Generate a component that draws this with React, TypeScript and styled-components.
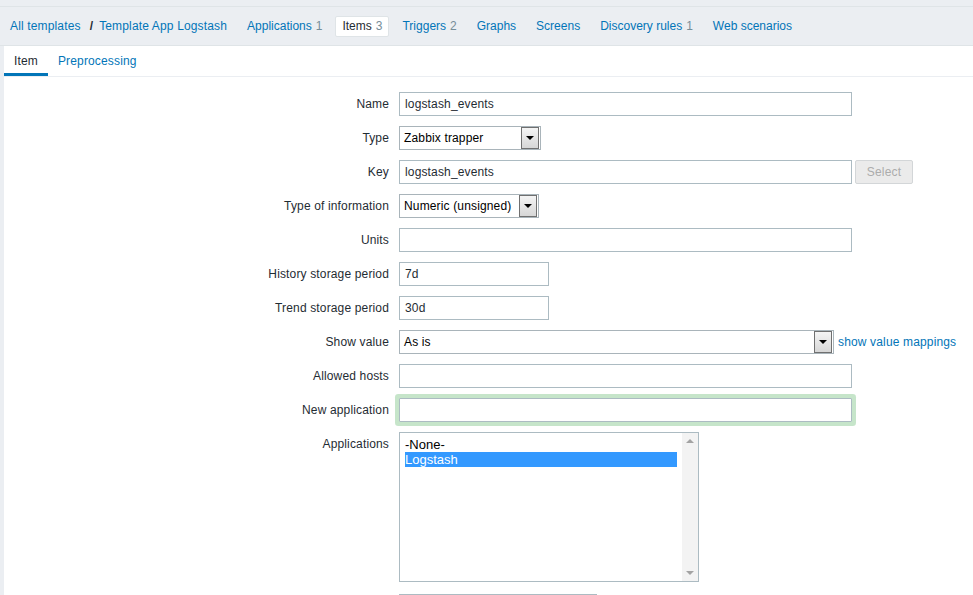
import React from 'react';
import styled, { createGlobalStyle } from 'styled-components';

const GlobalStyle = createGlobalStyle`
  html, body {
    margin: 0;
    padding: 0;
    background: #ebeef2;
    font-family: "Liberation Sans", Arial, sans-serif;
    font-size: 12px;
    letter-spacing: 0.15px;
    color: #1f2c33;
  }
`;

const Page = styled.div`
  width: 973px;
  height: 595px;
  overflow: hidden;
  background: #ebeef2;
`;

const TopLine = styled.div`
  height: 6px;
  border-bottom: 1px solid #dfe4e7;
`;

const Nav = styled.nav`
  display: flex;
  align-items: center;
  height: 38px;
  padding-left: 10px;
  border-bottom: 1px solid #dfe4e7;
`;

const Crumbs = styled.div`
  display: flex;
  align-items: center;
  margin-right: 13px;
`;

const CrumbSep = styled.span`
  margin: 0 6px 0 9px;
  color: #1f2c33;
  font-weight: bold;
`;

const Link = styled.a`
  color: #0275b8;
  text-decoration: none;
  cursor: pointer;
  white-space: nowrap;
`;

const NavTab = styled.span<{ active?: boolean }>`
  display: flex;
  align-items: center;
  height: 21px;
  padding: 0 6px;
  margin-right: 6px;
  box-sizing: border-box;
  white-space: nowrap;
  letter-spacing: 0;
  background: ${p => (p.active ? '#ffffff' : 'transparent')};
  border: 1px solid ${p => (p.active ? '#dfe4e7' : 'transparent')};
  border-radius: 2px;
  color: ${p => (p.active ? '#1f2c33' : '#0275b8')};
`;

const Count = styled.span`
  color: #768d99;
  margin-left: 4px;
`;

const Card = styled.div`
  margin-left: 4px;
  background: #ffffff;
  height: 549px;
`;

const SubTabs = styled.div`
  display: flex;
  height: 30px;
  border-bottom: 1px solid #ebeef2;
`;

const SubTab = styled.span<{ active?: boolean }>`
  display: flex;
  align-items: center;
  padding: 0 10px;
  color: ${p => (p.active ? '#1f2c33' : '#0275b8')};
  box-shadow: ${p => (p.active ? 'inset 0 -3px 0 #0275b8' : 'none')};
  cursor: pointer;
`;

const Form = styled.div`
  display: grid;
  grid-template-columns: 385px 1fr;
  column-gap: 10px;
  row-gap: 10px;
  padding-top: 15px;
`;

const Label = styled.label`
  text-align: right;
  line-height: 24px;
  height: 24px;
  white-space: nowrap;
`;

const Field = styled.div<{ gapTop?: number }>`
  display: flex;
  align-items: center;
  margin-top: ${p => p.gapTop || 0}px;
`;

const TextInput = styled.div<{ w: number; focused?: boolean }>`
  width: ${p => p.w}px;
  height: 24px;
  box-sizing: border-box;
  border: 1px solid #acbbc2;
  padding: 0 5px;
  line-height: 22px;
  background: #ffffff;
  color: #1f2c33;
  white-space: nowrap;
  box-shadow: ${p => (p.focused ? '0 0 0 4px #c6e5ca' : 'none')};
  border-radius: ${p => (p.focused ? '1px' : '0')};
`;

const SelectBox = styled.div<{ w: number }>`
  display: flex;
  align-items: center;
  width: ${p => p.w}px;
  height: 24px;
  box-sizing: border-box;
  border: 1px solid #a9b4ba;
  padding-left: 4px;
  background: #ffffff;
  color: #000000;
  white-space: nowrap;
`;

const SelectText = styled.span`
  flex: 1;
`;

const ArrowButton = styled.span`
  display: flex;
  align-items: center;
  justify-content: center;
  width: 16px;
  height: 20px;
  margin-right: 1px;
  border: 1px solid #707070;
  background: linear-gradient(#f4f4f4, #d6d6d6);
  &:after {
    content: '';
    border-left: 4px solid transparent;
    border-right: 4px solid transparent;
    border-top: 4px solid #000000;
  }
`;

const GrayButton = styled.span`
  display: flex;
  align-items: center;
  justify-content: center;
  width: 58px;
  height: 24px;
  box-sizing: border-box;
  margin-left: 3px;
  border: 1px solid #d3d6d8;
  border-radius: 2px;
  background: #ebebeb;
  color: #acacac;
`;

const SideLink = styled(Link)`
  margin-left: 4px;
`;

const ListBox = styled.div`
  display: flex;
  width: 300px;
  height: 150px;
  box-sizing: border-box;
  border: 1px solid #acbbc2;
  background: #ffffff;
`;

const ListItems = styled.div`
  flex: 1;
  padding: 4px 5px 0 5px;
  font-size: 13px;
  letter-spacing: 0;
`;

const ListItem = styled.div<{ selected?: boolean }>`
  height: 15px;
  line-height: 15px;
  color: ${p => (p.selected ? '#ffffff' : '#000000')};
  background: ${p => (p.selected ? '#3399ff' : 'transparent')};
`;

const Scrollbar = styled.div`
  display: flex;
  flex-direction: column;
  justify-content: space-between;
  align-items: center;
  width: 16px;
  padding: 6px 0;
  box-sizing: border-box;
  background: #f3f3f3;
`;

const ScrollArrow = styled.span<{ down?: boolean }>`
  width: 0;
  height: 0;
  border-left: 4px solid transparent;
  border-right: 4px solid transparent;
  ${p => (p.down ? 'border-top: 4px solid #a3a3a3;' : 'border-bottom: 4px solid #a3a3a3;')}
`;

const Select = ({ w, value }: { w: number; value: string }) => (
  <SelectBox w={w}>
    <SelectText>{value}</SelectText>
    <ArrowButton />
  </SelectBox>
);

const tabs: { label: string; count?: number; active?: boolean }[] = [
  { label: 'Applications', count: 1 },
  { label: 'Items', count: 3, active: true },
  { label: 'Triggers', count: 2 },
  { label: 'Graphs' },
  { label: 'Screens' },
  { label: 'Discovery rules', count: 1 },
  { label: 'Web scenarios' },
];

export default function App() {
  return (
    <Page>
      <GlobalStyle />
      <TopLine />
      <Nav>
        <Crumbs>
          <Link>All templates</Link>
          <CrumbSep>/</CrumbSep>
          <Link>Template App Logstash</Link>
        </Crumbs>
        {tabs.map(t => (
          <NavTab key={t.label} active={t.active}>
            {t.label}
            {t.count !== undefined && <Count>{t.count}</Count>}
          </NavTab>
        ))}
      </Nav>
      <Card>
        <SubTabs>
          <SubTab active>Item</SubTab>
          <SubTab>Preprocessing</SubTab>
        </SubTabs>
        <Form>
          <Label>Name</Label>
          <Field>
            <TextInput w={453}>logstash_events</TextInput>
          </Field>

          <Label>Type</Label>
          <Field>
            <Select w={142} value="Zabbix trapper" />
          </Field>

          <Label>Key</Label>
          <Field>
            <TextInput w={453}>logstash_events</TextInput>
            <GrayButton>Select</GrayButton>
          </Field>

          <Label>Type of information</Label>
          <Field>
            <Select w={140} value="Numeric (unsigned)" />
          </Field>

          <Label>Units</Label>
          <Field>
            <TextInput w={453} />
          </Field>

          <Label>History storage period</Label>
          <Field>
            <TextInput w={150}>7d</TextInput>
          </Field>

          <Label>Trend storage period</Label>
          <Field>
            <TextInput w={150}>30d</TextInput>
          </Field>

          <Label>Show value</Label>
          <Field>
            <Select w={435} value="As is" />
            <SideLink>show value mappings</SideLink>
          </Field>

          <Label>Allowed hosts</Label>
          <Field>
            <TextInput w={453} />
          </Field>

          <Label>New application</Label>
          <Field>
            <TextInput w={453} focused />
          </Field>

          <Label>Applications</Label>
          <Field>
            <ListBox>
              <ListItems>
                <ListItem>-None-</ListItem>
                <ListItem selected>Logstash</ListItem>
              </ListItems>
              <Scrollbar>
                <ScrollArrow />
                <ScrollArrow down />
              </Scrollbar>
            </ListBox>
          </Field>

          <Label />
          <Field gapTop={2}>
            <TextInput w={198} />
          </Field>
        </Form>
      </Card>
    </Page>
  );
}
